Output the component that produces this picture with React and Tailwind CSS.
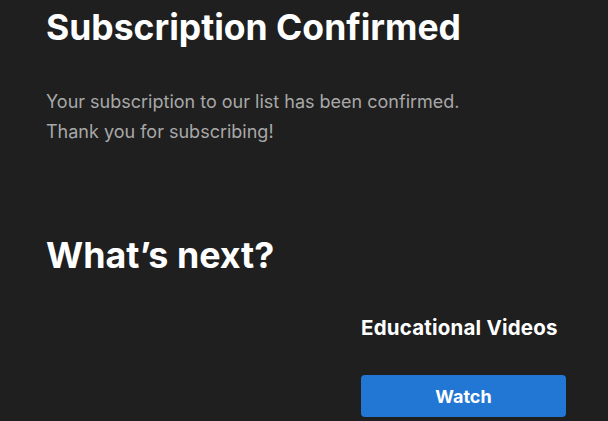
import React from 'react';

const App = () => {
  return (
    <div className="min-h-screen bg-[#1f1f1f] text-white font-['Inter',sans-serif] overflow-hidden">
      <div className="pl-[46px] pr-[42px] pt-[4px]">
        <h1 className="text-[35.5px] font-bold leading-[48px]">Subscription Confirmed</h1>
        <p className="mt-[35px] text-[18px] leading-[30px] text-[#a8a8a8]">
          Your subscription to our list has been confirmed.
          <br />
          Thank you for subscribing!
        </p>
        <h2 className="mt-[84px] text-[35.8px] font-bold leading-[48px]">What’s next?</h2>
        <div className="mt-[34px] grid grid-cols-[1fr_205px]">
          <div></div>
          <div>
            <h3 className="text-[20.5px] font-bold leading-[30px] tracking-[0.2px]">Educational Videos</h3>
            <button className="mt-[32px] w-full h-[42px] rounded-[4px] bg-[#2277d4] text-[18px] font-bold text-white">
              Watch
            </button>
          </div>
        </div>
      </div>
    </div>
  );
};

export default App;
